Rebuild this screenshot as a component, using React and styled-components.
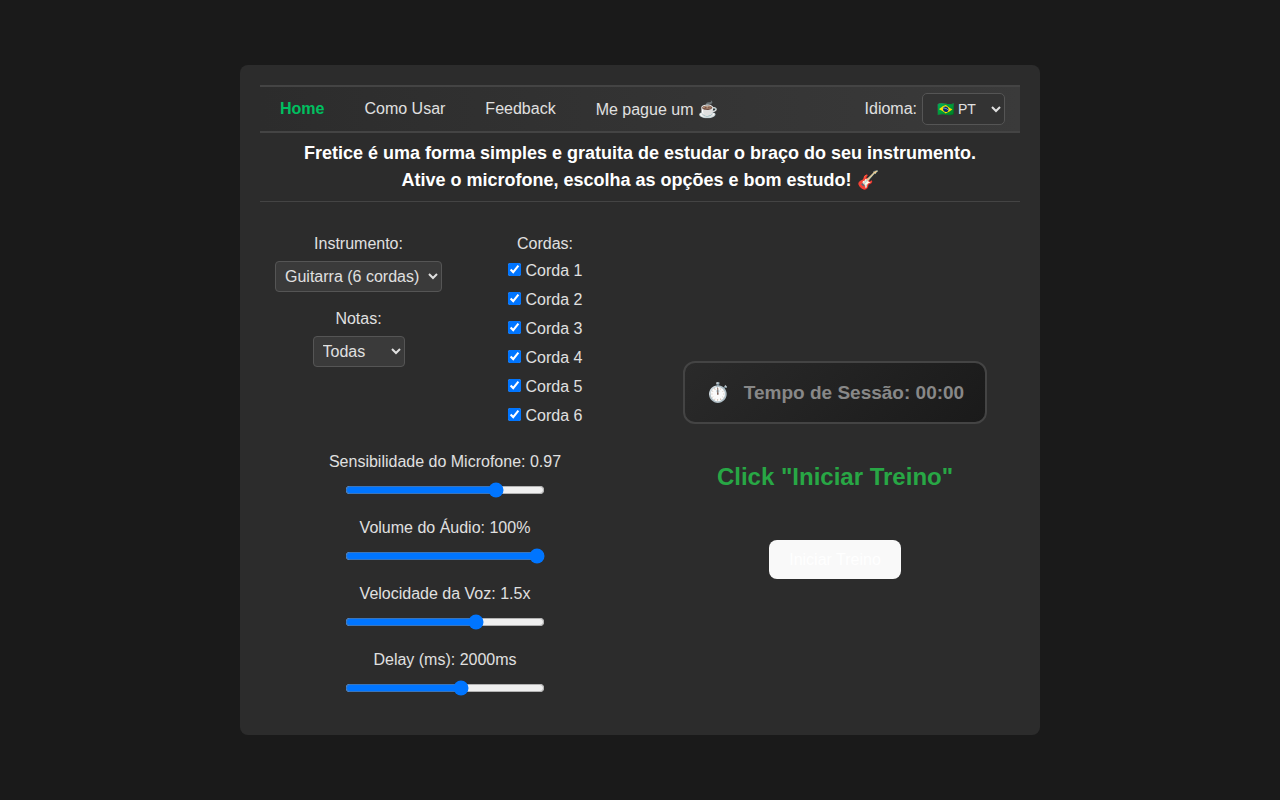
import React from "react";
import styled, { createGlobalStyle } from "styled-components";

const GlobalStyle = createGlobalStyle`
  html, body {
    margin: 0;
    min-height: 100%;
    background: #1a1a1a;
    font-family: "Liberation Sans", Arial, sans-serif;
    color: #e0e0e0;
  }
`;

const Page = styled.div`
  box-sizing: border-box;
  height: 800px;
  display: flex;
  align-items: center;
  justify-content: center;
`;

const Card = styled.main`
  box-sizing: border-box;
  width: 800px;
  height: 670px;
  padding: 20px;
  background: #2c2c2c;
  border-radius: 8px;
  display: flex;
  flex-direction: column;
`;

const Nav = styled.nav`
  box-sizing: border-box;
  height: 48px;
  display: flex;
  align-items: center;
  border-top: 2px solid #444;
  border-bottom: 2px solid #444;
  background: linear-gradient(90deg, #2c2c2c, #3a3a3a);
`;

const NavLink = styled.a`
  padding: 0 20px;
  font-size: 16px;
  color: ${(p) => (p.$active ? "#00c060" : "#e0e0e0")};
  font-weight: ${(p) => (p.$active ? "bold" : "normal")};
`;

const LangBox = styled.div`
  margin-left: auto;
  margin-right: 15px;
  display: flex;
  align-items: center;
  gap: 5px;
  font-size: 16px;
`;

const LangSelect = styled.select`
  width: 83px;
  height: 32px;
  padding: 0 5px 0 10px;
  font-family: inherit;
  font-size: 14px;
  color: #e0e0e0;
  background: #333;
  border: 1px solid #555;
  border-radius: 5px;
`;

const Intro = styled.header`
  padding: 7px 0;
  border-bottom: 1px solid #444;
  font-size: 18px;
  line-height: 27px;
  font-weight: bold;
  text-align: center;
  color: #fff;
`;

const Columns = styled.div`
  display: grid;
  grid-template-columns: 370px 370px;
  gap: 20px;
  margin-top: 30px;
`;

const LeftColumn = styled.section`
  display: flex;
  flex-direction: column;
`;

const TopControls = styled.div`
  display: flex;
  gap: 65px;
  padding-left: 15px;
`;

const SelectStack = styled.div`
  width: 167px;
  display: flex;
  flex-direction: column;
  align-items: center;
`;

const FieldLabel = styled.label`
  display: block;
  font-size: 16px;
  line-height: 24px;
  text-align: center;
`;

const Dropdown = styled.select`
  height: 31px;
  width: ${(p) => p.$width}px;
  margin-top: 5px;
  margin-bottom: 15px;
  padding: 5px;
  font-family: inherit;
  font-size: 16px;
  color: #e0e0e0;
  background: #3a3a3a;
  border: 1px solid #555;
  border-radius: 4px;
`;

const Strings = styled.div`
  width: 76px;
  display: flex;
  flex-direction: column;
  align-items: center;
`;

const StringRow = styled.label`
  display: flex;
  align-items: center;
  height: 29px;
  font-size: 16px;
  white-space: nowrap;
`;

const Check = styled.input`
  width: 13px;
  height: 13px;
  margin: 0 5px 2px 0;
`;

const Sliders = styled.div`
  margin-top: 20px;
  display: flex;
  flex-direction: column;
  align-items: center;
`;

const SliderGroup = styled.div`
  height: 66px;
  display: flex;
  flex-direction: column;
  align-items: center;
`;

const Slider = styled.input`
  width: 200px;
  height: 16px;
  margin: 8px 0 0;
`;

const RightColumn = styled.section`
  display: flex;
  flex-direction: column;
  align-items: center;
  padding-top: 129px;
`;

const Timer = styled.div`
  box-sizing: border-box;
  width: 304px;
  height: 63px;
  display: flex;
  align-items: center;
  justify-content: center;
  gap: 14px;
  border: 2px solid #444;
  border-radius: 12px;
  background: linear-gradient(135deg, #2a2a2a, #1a1a1a);
  font-size: 19px;
  font-weight: bold;
  color: #888;
`;

const Status = styled.h2`
  margin: 38px 0 0;
  font-size: 24px;
  line-height: 30px;
  font-weight: bold;
  color: #28a745;
`;

const StartButton = styled.button`
  box-sizing: border-box;
  width: 132px;
  height: 39px;
  margin-top: 48px;
  border: 0;
  border-radius: 8px;
  background: #f9f9f9;
  color: #fff;
  font-family: inherit;
  font-size: 16px;
`;

const strings = [1, 2, 3, 4, 5, 6];

const sliders = [
  { label: "Sensibilidade do Microfone: 0.97", min: 0, max: 1.25, step: 0.01, value: 0.97 },
  { label: "Volume do Áudio: 100%", min: 0, max: 100, step: 1, value: 100 },
  { label: "Velocidade da Voz: 1.5x", min: 0.5, max: 2, step: 0.1, value: 1.5 },
  { label: "Delay (ms): 2000ms", min: 0, max: 3400, step: 100, value: 2000 },
];

const App = () => (
  <Page>
    <GlobalStyle />
    <Card>
      <Nav>
        <NavLink $active>Home</NavLink>
        <NavLink>Como Usar</NavLink>
        <NavLink>Feedback</NavLink>
        <NavLink>Me pague um ☕</NavLink>
        <LangBox>
          Idioma:
          <LangSelect defaultValue="pt">
            <option value="pt">🇧🇷 PT</option>
            <option value="en">🇺🇸 EN</option>
          </LangSelect>
        </LangBox>
      </Nav>
      <Intro>
        Fretice é uma forma simples e gratuita de estudar o braço do seu instrumento.
        <br />
        Ative o microfone, escolha as opções e bom estudo! 🎸
      </Intro>
      <Columns>
        <LeftColumn>
          <TopControls>
            <SelectStack>
              <FieldLabel>Instrumento:</FieldLabel>
              <Dropdown $width={167} defaultValue="g6">
                <option value="g6">Guitarra (6 cordas)</option>
              </Dropdown>
              <FieldLabel>Notas:</FieldLabel>
              <Dropdown $width={92} defaultValue="all">
                <option value="all">Todas</option>
              </Dropdown>
            </SelectStack>
            <Strings>
              <FieldLabel>Cordas:</FieldLabel>
              {strings.map((n) => (
                <StringRow key={n}>
                  <Check type="checkbox" defaultChecked />
                  Corda {n}
                </StringRow>
              ))}
            </Strings>
          </TopControls>
          <Sliders>
            {sliders.map((s) => (
              <SliderGroup key={s.label}>
                <FieldLabel>{s.label}</FieldLabel>
                <Slider type="range" min={s.min} max={s.max} step={s.step} defaultValue={s.value} />
              </SliderGroup>
            ))}
          </Sliders>
        </LeftColumn>
        <RightColumn>
          <Timer>
            <span>⏱️</span>
            <span>Tempo de Sessão: 00:00</span>
          </Timer>
          <Status>Click "Iniciar Treino"</Status>
          <StartButton>Iniciar Treino</StartButton>
        </RightColumn>
      </Columns>
    </Card>
  </Page>
);

export default App;
